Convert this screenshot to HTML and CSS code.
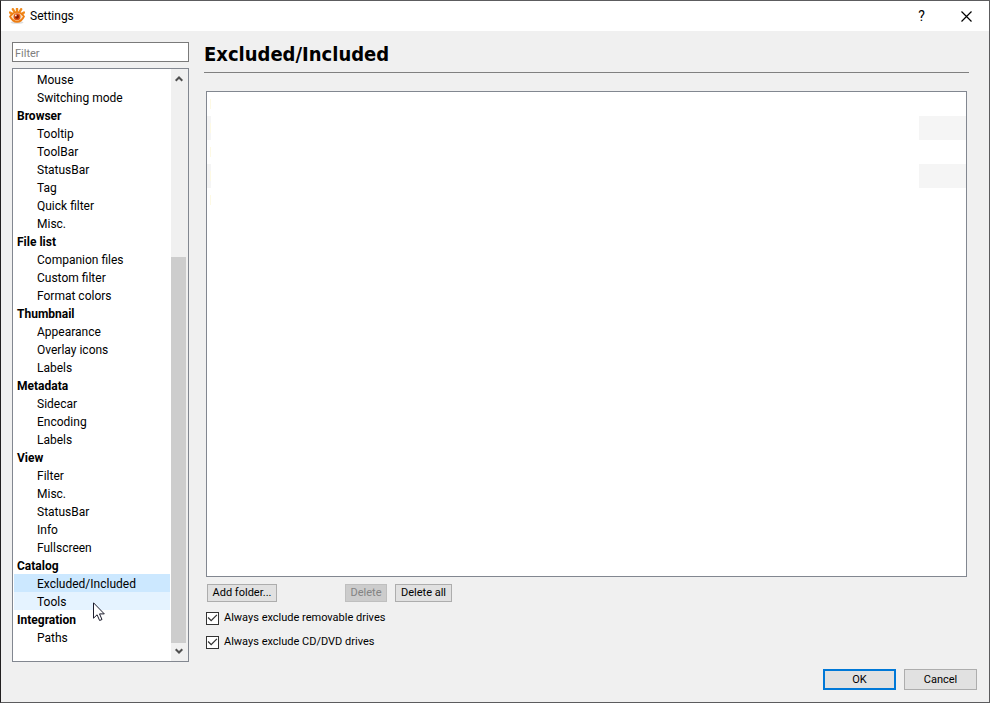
FILE: index.html
```html
<!DOCTYPE html>
<html lang="en">
<head>
<meta charset="utf-8">
<title>Settings</title>
<link rel="stylesheet" href="styles.css">
</head>
<body>
<div class="window">
  <header class="titlebar">
    <svg class="app-icon" viewBox="0 0 16 16" aria-hidden="true">
      <ellipse cx="8" cy="14.500" rx="6.500" ry="1.300" fill="#ddd"/>
      <path d="M3.500 6 1 4.500M5.500 4 3.800 1.200M8 3.500V.8M10.500 4l1.700-2.800M12.500 6 15 4.500" stroke="#f08a1d" stroke-width="2.400" stroke-linecap="round"/>
      <path d="M0 8.500Q3 3.500 8 3.500t8 5Q13 14.800 8 14.800T0 8.500Z" fill="#ee7d12"/>
      <path d="M2 8.500Q5 4.800 8 4.800t6 3.700Q11 12.800 8 12.800T2 8.500Z" fill="#fbe3c0"/>
      <circle cx="8" cy="8.800" r="3.500" fill="#e0530f"/>
      <circle cx="8" cy="8.800" r="2" fill="#8c1c05"/>
      <circle cx="6.800" cy="7.500" r=".9" fill="#ffe9d0"/>
    </svg>
    <h1 class="title">Settings</h1>
    <button class="caption-button" type="button" aria-label="Help">?</button>
    <button class="caption-button" type="button" aria-label="Close">
      <svg class="close-icon" viewBox="0 0 11 11" aria-hidden="true"><path d="M.5.5l10 10M10.500.5l-10 10" stroke="#000" stroke-width="1.200"/></svg>
    </button>
  </header>
  <div class="content">
    <aside class="sidebar">
      <input class="filter" type="text" placeholder="Filter" aria-label="Filter">
      <div class="tree-box">
        <nav class="tree" aria-label="Settings pages">
          <a href="#">Mouse</a>
          <a href="#">Switching mode</a>
          <a class="group" href="#">Browser</a>
          <a href="#">Tooltip</a>
          <a href="#">ToolBar</a>
          <a href="#">StatusBar</a>
          <a href="#">Tag</a>
          <a href="#">Quick filter</a>
          <a href="#">Misc.</a>
          <a class="group" href="#">File list</a>
          <a href="#">Companion files</a>
          <a href="#">Custom filter</a>
          <a href="#">Format colors</a>
          <a class="group" href="#">Thumbnail</a>
          <a href="#">Appearance</a>
          <a href="#">Overlay icons</a>
          <a href="#">Labels</a>
          <a class="group" href="#">Metadata</a>
          <a href="#">Sidecar</a>
          <a href="#">Encoding</a>
          <a href="#">Labels</a>
          <a class="group" href="#">View</a>
          <a href="#">Filter</a>
          <a href="#">Misc.</a>
          <a href="#">StatusBar</a>
          <a href="#">Info</a>
          <a href="#">Fullscreen</a>
          <a class="group" href="#">Catalog</a>
          <a class="selected" href="#" aria-current="page">Excluded/Included</a>
          <a class="hovered" href="#">Tools
            <svg class="cursor" viewBox="0 0 12 20" aria-hidden="true"><path d="M.5.800v15.400l3.600-3.400 2.500 5.700 2.400-1-2.500-5.600h4.800Z" fill="#fff" stroke="#1c1c2c"/></svg>
          </a>
          <a class="group" href="#">Integration</a>
          <a href="#">Paths</a>
        </nav>
        <div class="scrollbar">
          <svg class="arrow" viewBox="0 0 8 6" aria-hidden="true"><path d="M.7 4.800 4 1.500l3.300 3.300" fill="none" stroke="#505050" stroke-width="2"/></svg>
          <div class="track"><div class="thumb"></div></div>
          <svg class="arrow" viewBox="0 0 8 6" aria-hidden="true"><path d="M.7 1.200 4 4.500l3.300-3.300" fill="none" stroke="#505050" stroke-width="2"/></svg>
        </div>
      </div>
    </aside>
    <main class="page">
      <h2 class="page-title">Excluded/Included</h2>
      <div class="page-body">
        <div class="folders">
          <div class="folder"></div>
          <div class="folder"></div>
          <div class="folder"></div>
          <div class="folder"></div>
          <div class="folder"></div>
        </div>
        <div class="actions">
          <button class="button add" type="button">Add folder...</button>
          <button class="button delete" type="button" disabled>Delete</button>
          <button class="button delete-all" type="button">Delete all</button>
        </div>
        <label class="option"><input type="checkbox" checked>Always exclude removable drives</label>
        <label class="option"><input type="checkbox" checked>Always exclude CD/DVD drives</label>
      </div>
    </main>
  </div>
  <footer class="footer">
    <button class="button dialog-button default" type="button">OK</button>
    <button class="button dialog-button" type="button">Cancel</button>
  </footer>
</div>
</body>
</html>
```
FILE: styles.css
```css
* {
  box-sizing: border-box;
}

body {
  margin: 0;
  background: #f0f0f0;
  color: #000;
  font: 12px/18px Roboto, "Open Sans", sans-serif;
}

button,
input {
  margin: 0;
  font: inherit;
  color: inherit;
}

.window {
  display: flex;
  flex-direction: column;
  min-height: 100vh;
  border: 1px solid #5c5c5e;
  border-left-color: #221f20;
}

.titlebar {
  display: flex;
  align-items: center;
  height: 30px;
  padding-left: 8px;
  background: #fff;
}

.app-icon {
  width: 16px;
  height: 16px;
  margin-right: 5px;
}

.title {
  flex: 1;
  margin: 0;
  font-size: 12px;
  font-weight: 400;
}

.caption-button {
  display: flex;
  align-items: center;
  justify-content: center;
  width: 45px;
  height: 30px;
  padding: 0;
  border: 0;
  background: none;
  font-size: 14px;
}

.close-icon {
  width: 11px;
  height: 11px;
}

.content {
  display: flex;
  flex: 1;
  gap: 15px;
  padding: 11px 20px 0 11px;
}

.sidebar {
  display: flex;
  flex-direction: column;
  gap: 6px;
  width: 177px;
}

.filter {
  height: 20px;
  padding: 2px 2px 0;
  border: 1px solid #7a7a7a;
  background: #fff;
  font-size: 11px;
}

.filter::placeholder {
  color: #808080;
}

.tree-box {
  display: flex;
  flex: 1;
  border: 1px solid #828790;
  background: #fff;
}

.tree {
  flex: 1;
  padding: 1px 1px 0;
}

.tree a {
  display: block;
  position: relative;
  height: 18px;
  padding-left: 23px;
  color: inherit;
  line-height: 20px;
  text-decoration: none;
  white-space: nowrap;
}

.tree .group {
  padding-left: 3px;
  font-weight: 700;
}

.tree .selected {
  background: #cce8ff;
}

.tree .hovered {
  background: #e5f3ff;
}

.cursor {
  position: absolute;
  top: 10px;
  left: 79px;
  z-index: 1;
  width: 12px;
  height: 20px;
}

.scrollbar {
  display: flex;
  flex-direction: column;
  align-items: center;
  width: 17px;
  padding: 7px 2px 7px 0;
  background: #f0f0f0;
}

.arrow {
  width: 8px;
  height: 6px;
}

.track {
  display: flex;
  flex: 1;
  flex-direction: column;
  justify-content: flex-end;
  align-self: stretch;
  margin: 4px 0 5px;
}

.thumb {
  height: 69.3%;
  background: #cdcdcd;
}

.page {
  display: flex;
  flex: 1;
  flex-direction: column;
}

.page-title {
  margin: 0;
  padding-bottom: 6px;
  border-bottom: 1px solid #808080;
  font: 700 20px/24px "DejaVu Sans Condensed", "DejaVu Sans", sans-serif;
}

.page-body {
  display: flex;
  flex: 1;
  flex-direction: column;
  padding: 18px 2px 0;
  font-size: 11px;
}

.folders {
  flex: 1;
  border: 1px solid #828790;
  background: #fff;
}

.folder {
  display: flex;
  justify-content: space-between;
  height: 24px;
}

.folder::before {
  content: "";
  width: 4px;
  background: linear-gradient(#fdf9e4, #fdf9e4) right center / 1px 10px no-repeat;
}

.folder::after {
  content: "";
  width: 47px;
}

.folder:nth-child(even)::before,
.folder:nth-child(even)::after {
  background-color: #f5f5f5;
}

.actions {
  display: flex;
  gap: 8px;
  margin: 7px 0 4px;
  padding-left: 1px;
}

.button {
  height: 18px;
  padding: 0;
  border: 1px solid #adadad;
  background: #e1e1e1;
  line-height: 16px;
  white-space: nowrap;
}

.button:disabled {
  border-color: #bfbfbf;
  background: #ccc;
  color: #838383;
}

.add {
  width: 70px;
  margin-right: 60px;
}

.delete {
  width: 42px;
}

.delete-all {
  width: 57px;
}

.option {
  display: flex;
  align-items: center;
  align-self: flex-start;
  gap: 5px;
  height: 24px;
  white-space: nowrap;
}

.option input {
  display: flex;
  align-items: center;
  justify-content: center;
  appearance: none;
  width: 13px;
  height: 13px;
  border: 1px solid #333;
  background: #fff;
}

.option input:checked::before {
  content: "";
  width: 11px;
  height: 11px;
  background: #333;
  clip-path: polygon(6% 50%, 14% 42%, 38% 66%, 86% 18%, 94% 26%, 38% 82%);
}

.footer {
  display: flex;
  justify-content: flex-end;
  gap: 8px;
  padding: 15px 12px 12px;
  font-size: 11px;
}

.sidebar {
  margin-bottom: -8px;
}

.dialog-button {
  width: 73px;
  height: 21px;
}

.default {
  border: 2px solid #0078d7;
}
```
